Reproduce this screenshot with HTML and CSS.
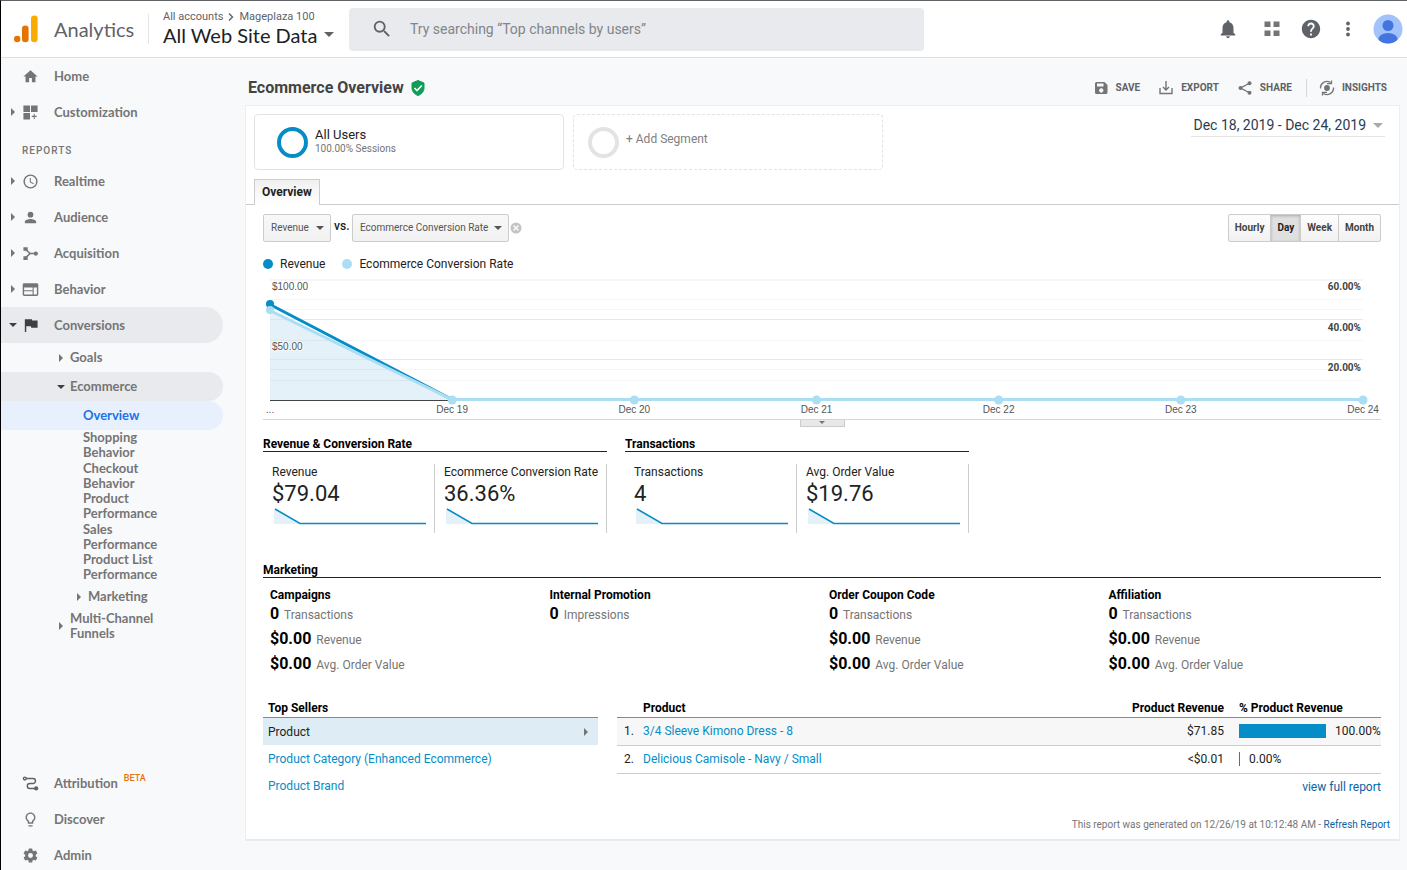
FILE: index.html
```html
<!DOCTYPE html>
<html lang="en">
<head>
  <meta charset="UTF-8" />
  <meta name="viewport" content="width=device-width, initial-scale=1.0" />
  <title>Analytics - Ecommerce Overview</title>
  <link rel="stylesheet" href="styles.css">
</head>
<body>
  <header class="topbar">
    <svg class="logo" width="24" height="28" viewBox="0 0 24 28">
      <circle cx="3.2" cy="24" r="3.2" fill="#e37400" />
      <rect x="8" y="10.500" width="6.600" height="16.700" rx="3.300" fill="#e37400" />
      <rect x="17" y="0.500" width="6.600" height="26.700" rx="3.300" fill="#f9ab00" />
    </svg>
    <span class="brand">Analytics</span>
    <div class="account">
      <div class="crumbs">All accounts
        <svg width="6" height="8" viewBox="0 0 6 8"><path d="M1 0.500L4.500 4L1 7.500" fill="none" stroke="#5f6368" stroke-width="1.400" /></svg>
        Mageplaza 100</div>
      <button class="view-picker">All Web Site Data <span class="caret"></span></button>
    </div>
    <label class="search">
      <svg width="22" height="22" viewBox="0 0 24 24"><path fill="#5f6368" d="M15.500 14h-.79l-.28-.27A6.470 6.470 0 0 0 16 9.500 6.500 6.500 0 1 0 9.500 16c1.610 0 3.090-.59 4.230-1.570l.27.28v.79l5 4.990L20.490 19l-4.990-5zm-6 0C7.010 14 5 11.990 5 9.500S7.010 5 9.500 5 14 7.010 14 9.500 11.990 14 9.500 14z" /></svg>
      <input type="text" placeholder="Try searching “Top channels by users”" aria-label="Search" />
    </label>
    <div class="top-icons">
      <button aria-label="Notifications"><svg width="22" height="22" viewBox="0 0 24 24"><path d="M12 22c1.100 0 2-.9 2-2h-4c0 1.100.9 2 2 2zm6-6v-5c0-3.070-1.640-5.640-4.500-6.320V4c0-.83-.67-1.500-1.500-1.500s-1.500.67-1.500 1.500v.68C7.630 5.360 6 7.920 6 11v5l-2 2v1h16v-1l-2-2z" /></svg></button>
      <button aria-label="Apps"><svg width="16" height="16" viewBox="0 0 16 16"><path fill="#757575" d="M0.500 0.500h6v5.500h-6zM9.500 0.500h6v5.500h-6zM0.500 9.500h6v5.500h-6zM9.500 9.500h6v5.500h-6z" /></svg></button>
      <button aria-label="Help"><svg width="22" height="22" viewBox="0 0 24 24"><path d="M12 2C6.480 2 2 6.480 2 12s4.480 10 10 10 10-4.480 10-10S17.520 2 12 2zm1 17h-2v-2h2v2zm2.070-7.750l-.9.920C13.450 12.900 13 13.500 13 15h-2v-.5c0-1.100.45-2.100 1.170-2.830l1.240-1.260c.37-.36.59-.86.59-1.410 0-1.100-.9-2-2-2s-2 .9-2 2H8c0-2.210 1.790-4 4-4s4 1.790 4 4c0 .88-.36 1.680-.93 2.250z" /></svg></button>
      <button aria-label="More"><svg width="6" height="16" viewBox="0 0 6 16"><circle cx="3" cy="2.500" r="1.900" /><circle cx="3" cy="8" r="1.900" /><circle cx="3" cy="13.500" r="1.900" /></svg></button>
      <button aria-label="Account"><svg width="30" height="30" viewBox="0 0 30 30"><defs><clipPath id="face"><circle cx="15" cy="15" r="14.500" /></clipPath></defs><circle cx="15" cy="15" r="14.500" fill="#a1c2fa" /><g clip-path="url(#face)" fill="#4374e0"><circle cx="15" cy="11.500" r="5.500" /><ellipse cx="15" cy="25" rx="9.500" ry="6" /></g></svg></button>
    </div>
  </header>

  <div class="layout">
    <nav class="sidebar">
      <a href="#" class="item"><svg class="icon" viewBox="0 0 24 24"><path d="M10 20v-6h4v6h5v-8h3L12 3 2 12h3v8z" /></svg>Home</a>
      <a href="#" class="item"><i class="arrow"></i><svg class="icon" viewBox="0 0 24 24"><path d="M2 2h9.300v9.300H2zM12.700 2H22v9.300h-9.300zM2 12.700h9.300V22H2zM16.500 14h1.500v2.700h2.700v1.500H18V21h-1.500v-2.800h-2.700v-1.500h2.700z" /></svg>Customization</a>
      <div class="caption">REPORTS</div>
      <a href="#" class="item"><i class="arrow"></i><svg class="icon" viewBox="0 0 24 24"><path d="M12 2a10 10 0 1 0 0 20 10 10 0 0 0 0-20zm0 18a8 8 0 1 1 0-16 8 8 0 0 1 0 16zM12.500 7H11v6l5 3 .8-1.200-4.300-2.600z" /></svg>Realtime</a>
      <a href="#" class="item"><i class="arrow"></i><svg class="icon" viewBox="0 0 24 24"><circle cx="12" cy="8" r="4" /><path d="M12 14c-2.700 0-8 1.300-8 4v2h16v-2c0-2.700-5.300-4-8-4z" /></svg>Audience</a>
      <a href="#" class="item"><i class="arrow"></i><svg class="icon" viewBox="0 0 24 24"><path d="M2 3h6v5H2zM2 16h6v5H2z" /><circle cx="19.500" cy="12" r="3" /><path d="M5 6l6.500 6L5 18M11 12h8" fill="none" stroke="#757575" stroke-width="2.200" /></svg>Acquisition</a>
      <a href="#" class="item"><i class="arrow"></i><svg class="icon" viewBox="0 0 24 24"><path fill-rule="evenodd" d="M21 3H3a2 2 0 0 0-2 2v14c0 1.100.9 2 2 2h18a2 2 0 0 0 2-2V5a2 2 0 0 0-2-2zM15 19H3v-4.500h12V19zm0-6H3V9h12v4zm6 6h-4.500V9H21v10z" /></svg>Behavior</a>
      <a href="#" class="item open"><i class="arrow down"></i><svg class="icon" viewBox="0 0 24 24"><path d="M14.400 5L14 3H4v18h2v-8h6.600l.4 2h9V5z" /></svg>Conversions</a>
      <a href="#" class="item sub"><i class="arrow"></i>Goals</a>
      <a href="#" class="item sub open"><i class="arrow down"></i>Ecommerce</a>
      <a href="#" class="item leaf current">Overview</a>
      <div class="leaves">
        <a href="#">Shopping Behavior</a>
        <a href="#">Checkout Behavior</a>
        <a href="#">Product Performance</a>
        <a href="#">Sales Performance</a>
        <a href="#">Product List Performance</a>
      </div>
      <a href="#" class="item nested"><i class="arrow"></i>Marketing</a>
      <a href="#" class="item sub wrap"><i class="arrow"></i><span>Multi-Channel Funnels</span></a>
      <div class="bottom">
        <a href="#" class="item"><svg class="icon" viewBox="0 0 24 24"><g fill="none" stroke="#5f6368" stroke-width="2"><circle cx="4" cy="5" r="2" /><path d="M6 5h9.500a3.500 3.500 0 0 1 0 7H11a3.500 3.500 0 0 0 0 7h8" /></g><circle cx="20" cy="19" r="3" fill="#5f6368" /></svg>Attribution <span class="beta">BETA</span></a>
        <a href="#" class="item"><svg class="icon" viewBox="0 0 24 24"><path d="M9 21c0 .55.45 1 1 1h4c.55 0 1-.45 1-1v-1H9v1zm3-19C8.140 2 5 5.140 5 9c0 2.380 1.190 4.470 3 5.740V17c0 .55.45 1 1 1h6c.55 0 1-.45 1-1v-2.260c1.810-1.270 3-3.360 3-5.740 0-3.860-3.140-7-7-7zm2.850 11.100l-.85.6V16h-4v-2.300l-.85-.6A4.997 4.997 0 0 1 7 9c0-2.760 2.240-5 5-5s5 2.240 5 5c0 1.630-.8 3.160-2.150 4.100z" /></svg>Discover</a>
        <a href="#" class="item"><svg class="icon" viewBox="0 0 24 24"><path fill-rule="evenodd" d="M19.400 13a7.500 7.500 0 0 0 0-2l2.100-1.650a.5.5 0 0 0 .12-.64l-2-3.460a.5.5 0 0 0-.6-.22l-2.500 1a7.300 7.300 0 0 0-1.700-.98l-.38-2.650A.5.5 0 0 0 14 2h-4a.5.5 0 0 0-.5.420l-.37 2.650a7.700 7.700 0 0 0-1.700.98l-2.480-1a.5.5 0 0 0-.6.220l-2 3.460a.5.5 0 0 0 .12.640L4.570 11a8 8 0 0 0 0 2l-2.100 1.650a.5.5 0 0 0-.12.640l2 3.460c.12.220.38.300.6.220l2.480-1c.52.400 1.080.73 1.700.98l.37 2.650c.04.240.25.420.5.420h4c.25 0 .46-.18.500-.42l.37-2.650a7.300 7.300 0 0 0 1.700-.98l2.480 1c.23.090.48 0 .6-.22l2-3.460a.5.5 0 0 0-.12-.64zM12 15.500a3.500 3.500 0 1 1 0-7 3.500 3.500 0 0 1 0 7z" /></svg>Admin</a>
      </div>
    </nav>

    <main class="main">
      <div class="title-row">
        <h1>Ecommerce Overview</h1>
        <svg width="14" height="16" viewBox="0 0 14 16"><path d="M7 0.500L13 3v5c0 3.500-2.500 6.300-6 7.500C3.500 14.300 1 11.500 1 8V3z" fill="#0f9d58" stroke="#0f9d58" stroke-linejoin="round" /><path d="M3.500 8l2.500 2.500L10.800 5.500" fill="none" stroke="#fff" stroke-width="1.600" /></svg>
        <div class="actions">
          <button><svg width="16" height="16" viewBox="0 0 16 16"><path fill-rule="evenodd" d="M3.500 2H11.500L14.500 5V12.500A1.500 1.500 0 0 1 13 14H3.500A1.500 1.500 0 0 1 2 12.500V3.500A1.500 1.500 0 0 1 3.500 2zM4 3.500V6.500H10.500V3.500zM8.200 8.300a2.200 2.200 0 1 0 .1 0z" /></svg>SAVE</button>
          <button><svg width="16" height="16" viewBox="0 0 16 16"><path d="M2 8v5.500h12V8M8 1v9M5 7l3 3 3-3" fill="none" stroke="#757575" stroke-width="1.400" /></svg>EXPORT</button>
          <button><svg width="16" height="16" viewBox="0 0 16 16"><path d="M13 3L3.500 8L13 13" fill="none" stroke="#757575" stroke-width="1.400" /><circle cx="3.500" cy="8" r="2" /><circle cx="12.500" cy="3.200" r="2" /><circle cx="12.500" cy="12.800" r="2" /></svg>SHARE</button>
          <button class="insights"><svg width="16" height="16" viewBox="0 0 16 16"><circle cx="8" cy="8" r="2.900" /><g fill="none" stroke="#757575" stroke-width="1.300"><path d="M1.500 8.500A6.500 6.500 0 0 1 11.500 2.500M14.500 7.500A6.500 6.500 0 0 1 4.500 13.500M8 3.600h4.500v-3M8 12.400H3.500v3" /></g></svg>INSIGHTS</button>
        </div>
      </div>

      <div class="card">
        <div class="segments">
          <div class="segment"><span class="ring"></span><div class="seg-text"><div class="seg-name">All Users</div><div class="seg-info">100.00% Sessions</div></div></div>
          <button class="segment add"><span class="ring"></span><span class="add-text">+ Add Segment</span></button>
          <button class="dates">Dec 18, 2019 - Dec 24, 2019 <span class="caret"></span></button>
        </div>

        <div class="tabs"><button class="tab">Overview</button></div>

        <div class="content">
          <div class="controls">
            <span class="picker"><select aria-label="First metric"><option>Revenue</option></select></span>
            <span class="vs">vs.</span>
            <span class="picker wide"><select aria-label="Second metric"><option>Ecommerce Conversion Rate</option></select></span>
            <button class="clear" aria-label="Remove metric"><svg width="12" height="12" viewBox="0 0 12 12"><circle cx="6" cy="6" r="5.500" fill="#c4c4c4" /><path d="M3.500 3.500l5 5M8.500 3.500l-5 5" stroke="#fff" stroke-width="1.300" /></svg></button>
            <div class="periods">
              <button>Hourly</button><button class="active">Day</button><button>Week</button><button>Month</button>
            </div>
          </div>

          <div class="legend">
            <span class="dot"></span>Revenue
            <span class="dot light"></span>Ecommerce Conversion Rate
          </div>

          <div class="chart">
            <svg class="plot" width="100%" height="140">
              <g class="grid">
                <rect width="100%" height="2" y="0" fill="#f5f5f5" />
                <line x2="100%" y1="20.500" y2="20.500" />
                <line x2="100%" y1="30.500" y2="30.500" />
                <line x2="100%" y1="40.500" y2="40.500" class="major" />
                <line x2="100%" y1="61.500" y2="61.500" />
                <line x2="100%" y1="80.500" y2="80.500" class="major" />
                <line x2="100%" y1="90.500" y2="90.500" />
                <line x2="100%" y1="101.500" y2="101.500" />
              </g>
              <svg width="100%" height="140" viewBox="0 0 600 140" preserveAspectRatio="none" overflow="visible">
                <path d="M0 31L100 121H0z" fill="#e4f1f8" />
                <path d="M0 40.500H10M0 61.500H33M0 80.500H54M0 90.500H65M0 101.500H77" class="under" />
                <path d="M0 121.500H100" class="axis" />
                <path d="M0 25.500L100 120.500H600" class="line revenue" />
                <path d="M0 31.500L100 120.500H600" class="line rate" />
              </svg>
              <circle cx="0" cy="25" r="4" fill="#058dc7" />
              <g fill="#a9def4">
                <circle cx="0" cy="31" r="4" />
                <circle cx="16.667%" cy="121" r="4.500" />
                <circle cx="33.333%" cy="121" r="4.500" />
                <circle cx="50%" cy="121" r="4.500" />
                <circle cx="66.667%" cy="121" r="4.500" />
                <circle cx="83.333%" cy="121" r="4.500" />
                <circle cx="100%" cy="121" r="4.500" />
              </g>
              <g class="money">
                <text x="2" y="11">$100.00</text>
                <text x="2" y="71">$50.00</text>
              </g>
              <svg x="100%" overflow="visible" class="percent">
                <text x="-2" y="11">60.00%</text>
                <text x="-2" y="52">40.00%</text>
                <text x="-2" y="92">20.00%</text>
              </svg>
              <g class="days">
                <text x="0" y="134">...</text>
                <text x="16.667%" y="134">Dec 19</text>
                <text x="33.333%" y="134">Dec 20</text>
                <text x="50%" y="134">Dec 21</text>
                <text x="66.667%" y="134">Dec 22</text>
                <text x="83.333%" y="134">Dec 23</text>
                <text x="100%" y="134">Dec 24</text>
              </g>
            </svg>
          </div>
          <div class="handle"><button aria-label="Show annotations"><span class="caret"></span></button></div>

          <div class="stats">
            <section>
              <h2>Revenue &amp; Conversion Rate</h2>
              <div class="metrics">
                <div class="metric"><div class="label">Revenue</div><div class="value">$79.04</div>
                  <svg class="spark" viewBox="0 0 152 17"><path d="M0 1L26 16H0z" fill="#e4f1f8" /><path d="M1 1L26 15.500H152" /></svg></div>
                <div class="metric"><div class="label">Ecommerce Conversion Rate</div><div class="value">36.36%</div>
                  <svg class="spark" viewBox="0 0 152 17"><path d="M0 1L26 16H0z" fill="#e4f1f8" /><path d="M1 1L26 15.500H152" /></svg></div>
              </div>
            </section>
            <section>
              <h2>Transactions</h2>
              <div class="metrics">
                <div class="metric"><div class="label">Transactions</div><div class="value">4</div>
                  <svg class="spark" viewBox="0 0 152 17"><path d="M0 1L26 16H0z" fill="#e4f1f8" /><path d="M1 1L26 15.500H152" /></svg></div>
                <div class="metric"><div class="label">Avg. Order Value</div><div class="value">$19.76</div>
                  <svg class="spark" viewBox="0 0 152 17"><path d="M0 1L26 16H0z" fill="#e4f1f8" /><path d="M1 1L26 15.500H152" /></svg></div>
              </div>
            </section>
          </div>

          <h2>Marketing</h2>
          <div class="marketing">
            <div>
              <h3>Campaigns</h3>
              <p><b>0</b> Transactions</p>
              <p><b>$0.00</b> Revenue</p>
              <p><b>$0.00</b> Avg. Order Value</p>
            </div>
            <div>
              <h3>Internal Promotion</h3>
              <p><b>0</b> Impressions</p>
            </div>
            <div>
              <h3>Order Coupon Code</h3>
              <p><b>0</b> Transactions</p>
              <p><b>$0.00</b> Revenue</p>
              <p><b>$0.00</b> Avg. Order Value</p>
            </div>
            <div>
              <h3>Affiliation</h3>
              <p><b>0</b> Transactions</p>
              <p><b>$0.00</b> Revenue</p>
              <p><b>$0.00</b> Avg. Order Value</p>
            </div>
          </div>

          <div class="sellers">
            <div class="dimensions">
              <h3>Top Sellers</h3>
              <a href="#" class="selected">Product<i class="arrow"></i></a>
              <a href="#">Product Category (Enhanced Ecommerce)</a>
              <a href="#">Product Brand</a>
            </div>
            <div class="products">
              <table>
                <thead>
                  <tr><th class="num"></th><th>Product</th><th class="amount">Product Revenue</th><th class="share">% Product Revenue</th></tr>
                </thead>
                <tbody>
                  <tr><td class="num">1.</td><td><a href="#">3/4 Sleeve Kimono Dress - 8</a></td><td class="amount">$71.85</td><td class="share"><div class="share-cell"><span class="bar" style="width: 87px"></span>100.00%</div></td></tr>
                  <tr><td class="num">2.</td><td><a href="#">Delicious Camisole - Navy / Small</a></td><td class="amount">&lt;$0.01</td><td class="share"><div class="share-cell"><span class="bar" style="width: 1px"></span>0.00%</div></td></tr>
                </tbody>
              </table>
              <a href="#" class="full-report">view full report</a>
            </div>
          </div>
        </div>
        <div class="generated">This report was generated on 12/26/19 at 10:12:48 AM - <a href="#">Refresh Report</a></div>
      </div>
    </main>
  </div>
</body>
</html>
```
FILE: styles.css
```css
* { box-sizing: border-box; }
body {
  margin: 0; height: 100vh; display: flex; flex-direction: column; overflow: hidden;
  border-top: 1px solid #5f6368; border-left: 1px solid #000;
  background: #f8f9fb; color: #222; font: 12px/16px Roboto, sans-serif;
}
a { color: #058dc7; text-decoration: none; }
button { font: inherit; color: inherit; background: none; border: 0; padding: 0; cursor: pointer; }
h1, h2, h3, p { margin: 0; }
svg { display: block; flex: none; }

.caret { display: inline-block; border: 5px solid transparent; border-top-color: #5f6368; border-bottom: 0; }

/* top bar */
.topbar {
  flex: none; display: flex; align-items: center; height: 57px; padding-left: 13px;
  background: #fff; border-bottom: 1px solid #e0e0e0;
}
.brand { margin-left: 16px; width: 94px; font: 20px/28px Lato, sans-serif; color: #5f6368; }
.account { padding-left: 14px; width: 201px; border-left: 1px solid #e4e5e7; height: 30px; display: flex; flex-direction: column; justify-content: center; }
.crumbs { display: flex; align-items: center; gap: 5px; line-height: 14px; color: #5f6368; font-size: 11px; white-space: nowrap; }
.view-picker { display: flex; align-items: center; gap: 7px; padding-bottom: 3px; font: 20px/22px Lato, sans-serif; color: #202124; white-space: nowrap; }
.search { display: flex; align-items: center; gap: 15px; flex: 0 1 575px; height: 43px; padding: 0 22px; background: #e8eaed; border-radius: 4px; }
.search input { flex: 1; min-width: 0; border: 0; outline: 0; background: none; font: 14px Roboto, sans-serif; color: #202124; }
.search input::placeholder { color: #80868b; opacity: 1; }
.top-icons { display: flex; align-items: center; margin-left: auto; padding-right: 4px; fill: #5f6368; }
.top-icons button { margin-left: 23px; }
.top-icons button:nth-child(3) { margin-left: 20px; }
.top-icons button:nth-child(2) { margin-left: 25px; }
.top-icons button:last-child { margin-left: 22px; }

/* sidebar */
.layout { flex: 1; min-height: 0; display: flex; }
.sidebar { flex: none; width: 244px; display: flex; flex-direction: column; font: bold 13px/15px Lato, sans-serif; overflow: hidden; }
.sidebar a { color: #757575; }
.item { flex: none; position: relative; display: flex; align-items: center; width: 222px; height: 36px; padding-left: 53px; border-radius: 0 18px 18px 0; }
.icon { position: absolute; left: 21px; width: 17px; height: 17px; fill: #757575; }
.arrow { position: absolute; left: 10px; border: 4px solid transparent; border-left-color: #757575; border-right: 0; }
.arrow.down { left: 8px; border: 4px solid transparent; border-top-color: #3c4043; border-bottom: 0; }
.caption { height: 33px; padding: 13px 21px 0; font: 500 10px/16px Roboto, sans-serif; letter-spacing: 1px; color: #757575; }
.item.open { background: #e8eaed; }
.item.open .icon { fill: #3c4043; }
.item.sub { height: 29px; padding-left: 69px; }
.item.sub .arrow { left: 58px; }
.item.sub .arrow.down { left: 56px; }
.item.leaf { height: 29px; padding-left: 82px; }
.sidebar .current { background: #e8f0fe; color: #1a73e8; }
.leaves { width: 176px; padding-left: 82px; }
.leaves a { display: block; }
.leaves a:nth-child(odd) { margin-bottom: 1px; }
.item.nested { height: 27px; padding-left: 87px; }
.item.nested .arrow { left: 76px; }
.item.wrap { width: 170px; height: 32px; }
.bottom { margin-top: auto; height: 105px; flex: none; }
.beta { align-self: flex-start; margin: 7px 0 0 6px; font: 500 9px/12px Roboto, sans-serif; color: #e8710a; }

/* report */
.main { flex: 1; min-width: 0; padding-right: 7px; }
.title-row { display: flex; align-items: center; gap: 7px; height: 47px; padding: 12px 13px 0 3px; }
h1 { font-size: 16px; line-height: 20px; color: #444; }
.actions { display: flex; align-items: center; gap: 18px; margin-left: auto; font-weight: bold; font-size: 10px; color: #5f6368; fill: #757575; }
.actions button { display: flex; align-items: center; gap: 7px; height: 18px; }
.actions .insights { padding-left: 12px; border-left: 1px solid #d5d7da; margin-left: -4px; }
.card { background: #fff; border: 1px solid #eceef0; border-bottom: 2px solid #e8eaed; }
.segments { display: flex; gap: 9px; padding: 8px 14px 0 8px; }
.segment { display: flex; align-items: center; gap: 7px; width: 310px; height: 56px; padding-left: 22px; border: 1px solid #e3e3e3; border-radius: 4px; }
.segment.add { padding-left: 14px; border-style: dashed; color: #808080; }
.ring { width: 31px; height: 31px; border: 4px solid #058dc7; border-radius: 50%; }
.add .ring { border-color: #e3e3e3; }
.seg-text { padding-bottom: 2px; }
.add-text { padding-bottom: 6px; }
.seg-name { font-size: 13px; line-height: 14px; }
.seg-info { font-size: 10px; line-height: 13px; color: #757575; }
.dates { display: flex; align-items: center; gap: 7px; height: 23px; margin-left: auto; padding: 0 2px; border-bottom: 1px solid #e4e4e4; font-size: 14px; color: #2a3d50; }
.dates .caret { border-top-color: #aaa; }
.tabs { margin-top: 9px; height: 26px; padding-left: 8px; border-bottom: 1px solid #ccc; }
.tab { height: 26px; padding: 0 7px 2px; border: 1px solid #ccc; border-bottom: 0; background: linear-gradient(#f0f0f0, #fff); font-weight: bold; }
.content { padding: 8px 18px 0 17px; }

.controls { display: flex; align-items: center; height: 29px; }
.picker { position: relative; width: 68px; }
.picker.wide { width: 157px; }
.picker select { appearance: none; width: 100%; height: 28px; padding: 0 7px; border: 1px solid #ccc; border-radius: 2px; background: linear-gradient(#f8f8f8, #f1f1f1); font: 10px Roboto, sans-serif; color: #555; }
.picker::after { content: ""; position: absolute; right: 7px; top: 12px; border: 4px solid transparent; border-top-color: #555; border-bottom: 0; pointer-events: none; }
.vs { width: 18px; margin: 0 0 3px 3px; font-weight: 500; }
.clear { margin-left: 1px; }
.periods { display: flex; margin-left: auto; }
.periods button { height: 28px; padding: 0 6px; margin-left: -1px; border: 1px solid #ccc; background: linear-gradient(#fdfdfd, #f1f1f1); font-size: 10px; font-weight: bold; color: #444; }
.periods .active { background: #e0e0e0; box-shadow: inset 0 1px 3px #aaa; color: #222; }
.periods button:first-child { border-radius: 2px 0 0 2px; }
.periods button:last-child { border-radius: 0 2px 2px 0; }

.legend { display: flex; align-items: center; height: 16px; margin-top: 14px; }
.dot { width: 10px; height: 10px; margin-right: 7px; border-radius: 50%; background: #058dc7; }
.dot.light { margin-left: 17px; background: #a9def4; }

.chart { margin-top: 7px; padding: 0 18px 0 7px; border-bottom: 1px solid #d5d5d5; }
.plot { overflow: visible; font: 10px "Liberation Sans", Arial, sans-serif; fill: #555; }
.grid line { stroke: #f5f5f5; }
.grid .major { stroke: #e8e8e8; }
.under { stroke: #d8e6ed; fill: none; vector-effect: non-scaling-stroke; }
.axis { stroke: #444; vector-effect: non-scaling-stroke; }
.line { fill: none; stroke-width: 4px; vector-effect: non-scaling-stroke; }
.line.rate { stroke-width: 3px; }
.revenue { stroke: #058dc7; }
.line.revenue { stroke-width: 3px; }
.rate { stroke: #a9def4; }
.percent { font: bold 10px Roboto, sans-serif; text-anchor: end; fill: #444; }
.money { paint-order: stroke; stroke: #fff; stroke-width: 2px; stroke-opacity: .7; }
.days { text-anchor: middle; }
.handle { display: flex; justify-content: center; height: 16px; }
.handle button { display: flex; justify-content: center; width: 45px; height: 7px; padding-top: 1px; border: 1px solid #ccc; border-top: 0; background: #e8e8e8; }
.handle .caret { border-width: 3px; border-bottom: 0; border-top-color: #777; }

h2 { padding-top: 1px; border-bottom: 1px solid #222; font-size: 12px; line-height: 14px; color: #000; }
h3 { font-size: 12px; line-height: 16px; color: #000; }
.stats { display: flex; gap: 18px; margin-bottom: 29px; }
.stats section { width: 344px; }
.metrics { display: flex; margin-top: 12px; }
.metric { flex: 1; height: 69px; padding-left: 9px; border-right: 1px solid #ccc; white-space: nowrap; }
.label { line-height: 16px; }
.value { font-size: 22px; line-height: 28px; }
.spark { width: 152px; height: 17px; margin-left: 2px; fill: none; stroke: #058dc7; stroke-width: 1.500px; }
.spark path:first-child { stroke: none; }
.marketing { display: grid; grid-template-columns: repeat(4, 1fr); margin-top: 8px; height: 103px; }
.marketing > div { padding-left: 7px; }
.marketing p { line-height: 22px; margin-bottom: 3px; color: #757575; }
.marketing h3 { line-height: 18px; }
.marketing b { font-size: 16px; line-height: 16px; color: #000; margin-right: 2px; }

.sellers { display: flex; gap: 19px; margin-top: 10px; height: 106px; }
.dimensions { width: 335px; }
.dimensions h3 { height: 19px; padding: 1px 5px 0; border-bottom: 1px solid #888; }
.dimensions a { position: relative; display: flex; align-items: center; height: 27px; padding-left: 5px; }
.dimensions .selected { background: #deedf5; color: #222; }
.dimensions .arrow { left: auto; right: 10px; }
.products { flex: 1; }
table { width: 100%; border-collapse: collapse; }
th, td { height: 28px; padding: 0; text-align: left; border-bottom: 1px solid #ccc; }
th { height: 18px; border-bottom-color: #888; color: #000; }
tbody tr:first-child { background: #f7f7f7; }
.num { width: 26px; padding-left: 7px; }
.amount { width: 140px; text-align: right; }
.share { width: 157px; padding-left: 15px; }
.share-cell { display: flex; align-items: center; gap: 9px; }
.bar { height: 14px; background: #058dc7; }
.full-report { display: block; margin-top: 5px; text-align: right; color: #0b62a4; }
.generated { padding: 12px 9px 6px; text-align: right; font-size: 10px; color: #757575; }
.generated a { color: #0b62a4; }
```
